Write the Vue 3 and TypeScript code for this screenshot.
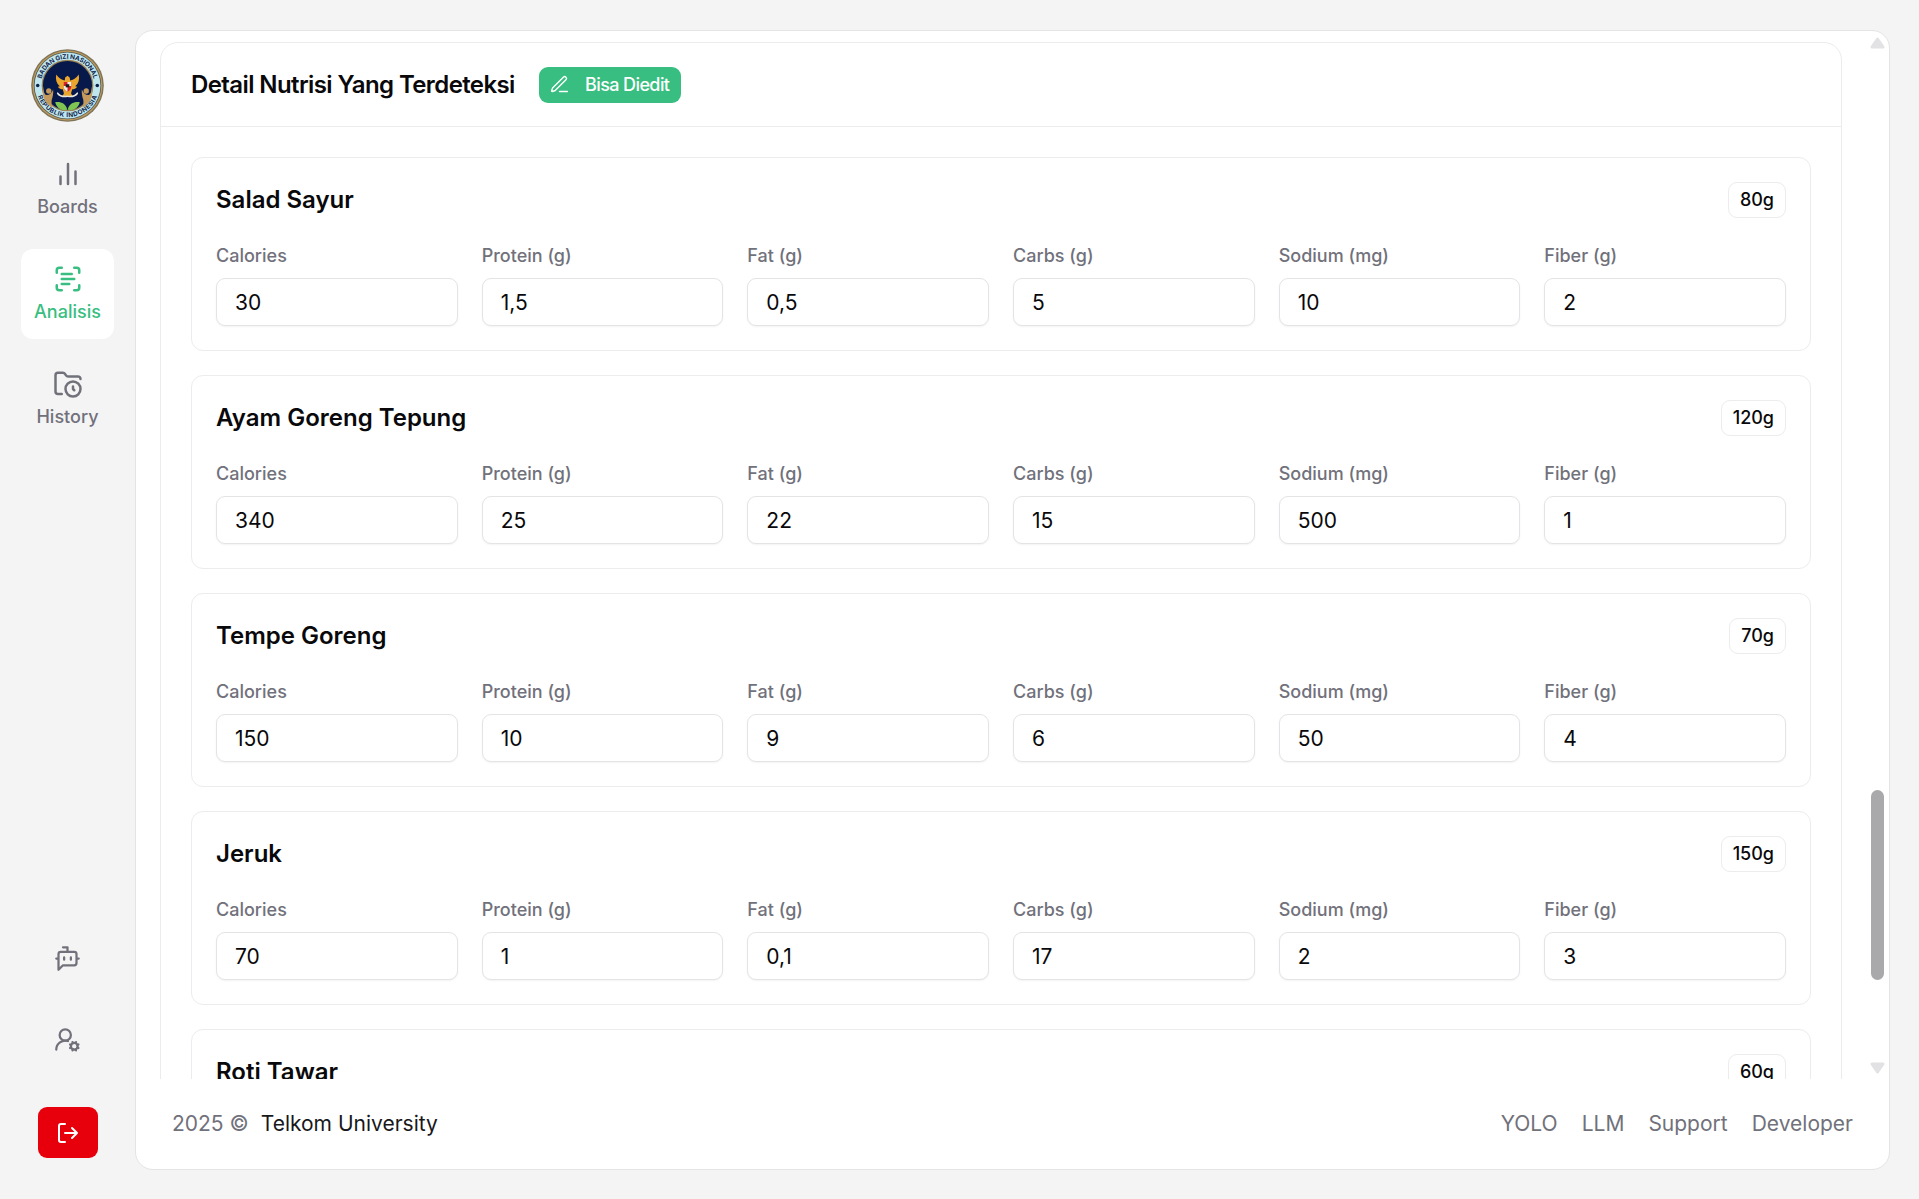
<script setup lang="ts">
interface Food {
  name: string
  weight: string
  values: string[]
}

const fields: string[] = ['Calories', 'Protein (g)', 'Fat (g)', 'Carbs (g)', 'Sodium (mg)', 'Fiber (g)']

const foods: Food[] = [
  { name: 'Salad Sayur', weight: '80g', values: ['30', '1,5', '0,5', '5', '10', '2'] },
  { name: 'Ayam Goreng Tepung', weight: '120g', values: ['340', '25', '22', '15', '500', '1'] },
  { name: 'Tempe Goreng', weight: '70g', values: ['150', '10', '9', '6', '50', '4'] },
  { name: 'Jeruk', weight: '150g', values: ['70', '1', '0,1', '17', '2', '3'] },
  { name: 'Roti Tawar', weight: '60g', values: [] },
]

const links: string[] = ['YOLO', 'LLM', 'Support', 'Developer']
</script>

<template>
  <div class="app">
    <aside class="sidebar">
      <svg class="logo" viewBox="0 0 74 74">
        <defs>
          <path id="arc-top" d="M9.800 37a27.200 27.200 0 0 1 54.400 0" />
          <path id="arc-bottom" d="M5 37a32 32 0 0 0 64 0" />
        </defs>
        <circle cx="37" cy="37" r="36.8" fill="#7f7458" />
        <circle cx="37" cy="37" r="35.4" fill="#c09a5c" />
        <circle cx="37" cy="37" r="34.2" fill="#4f5a55" />
        <circle cx="37" cy="37" r="33.4" fill="#bfe6ee" />
        <circle cx="37" cy="37" r="26.2" fill="#9a8455" />
        <circle cx="37" cy="37" r="24.9" fill="#07184a" />
        <text class="logo-text" textLength="72"><textPath href="#arc-top" startOffset="50%" text-anchor="middle">BADAN GIZI NASIONAL</textPath></text>
        <text class="logo-text" textLength="78"><textPath href="#arc-bottom" startOffset="50%" text-anchor="middle">REPUBLIK INDONESIA</textPath></text>
        <circle cx="6.8" cy="37" r="1.8" fill="#10214d" />
        <circle cx="67.2" cy="37" r="1.8" fill="#10214d" />
        <g fill="#c39a5b">
          <circle cx="18" cy="42.6" r="2.7" />
          <circle cx="56" cy="42.6" r="2.7" />
          <path d="M13.200 37c-1.200 4-.6 8.500 2.300 9.600 3 .4 5.500-2 7-5.600.3 4-.5 8-1.500 10.500-.4 2.500 0 5.500.5 8-4-2-8-7-9.300-12.500-.6-4 0-7 1-10z" />
          <path d="M60.800 37c1.200 4 .6 8.500-2.300 9.600-3 .4-5.500-2-7-5.600-.3 4 .5 8 1.500 10.500.4 2.500 0 5.500-.5 8 4-2 8-7 9.300-12.500.6-4 0-7-1-10z" />
        </g>
        <path d="M25.600 25.800c-1 5 .2 9 3.600 12l-2 .4c1.400 2 3.200 2.500 5 2.600l1.200 4-1.500 3h10.200l-1.500-3 1.200-4c1.800-.1 3.600-.6 5-2.600l-2-.4c3.400-3 4.600-7 3.600-12-2.400 3.600-5 5.400-8.600 6.200l-.6-3.200-2.200-1.600-2.400 1.600-.4 3.200c-3.600-.8-6.200-2.600-8.600-6.200z" fill="#e9a52c" />
        <path d="M33.200 33.500h7.600v5c0 2.200-2 3.800-3.800 4.800-1.800-1-3.800-2.600-3.800-4.800z" fill="#d8232a" />
        <path d="M37 33.500h3.800v4H37zM33.200 37.500H37v5.800c-1.800-1-3.800-2.600-3.800-4.800z" fill="#f3efe6" />
        <path d="M35.200 35.700h3.600v3.200h-3.600z" fill="#1b1b1b" />
        <path d="M27 43.500c2.500 3.500 6 4.300 10 3.600 4 .7 7.500-.1 10-3.600l.8 1.800c-2.800 3.600-6.600 4.200-10.800 3.400-4.200.8-8 .2-10.800-3.400z" fill="#e8e6df" />
        <path d="M36.800 61.500c-6.500 1.500-10.500-1.500-12.300-7.500 6-.8 10.900 1.500 12.300 7.500zM37.200 61.500c6.500 1.500 10.500-1.500 12.300-7.500-6-.8-10.900 1.500-12.300 7.500z" fill="#7fc552" />
      </svg>

      <nav class="nav">
        <a class="nav-item">
          <svg class="icon" viewBox="0 0 24 24"><path d="M18 20V10M12 20V4M6 20v-6" /></svg>
          <span>Boards</span>
        </a>
        <a class="nav-item active">
          <svg class="icon" viewBox="0 0 24 24"><path d="M3 7V5a2 2 0 0 1 2-2h2M17 3h2a2 2 0 0 1 2 2v2M21 17v2a2 2 0 0 1-2 2h-2M7 21H5a2 2 0 0 1-2-2v-2M7 8h8M7 12h10M7 16h6" /></svg>
          <span>Analisis</span>
        </a>
        <a class="nav-item">
          <svg class="icon" viewBox="0 0 24 24"><circle cx="16" cy="16" r="6" /><path d="M7 20H4a2 2 0 0 1-2-2V5a2 2 0 0 1 2-2h3.900a2 2 0 0 1 1.690.900l.810 1.200a2 2 0 0 0 1.670.900H20a2 2 0 0 1 2 2M16 14v2l1 1" /></svg>
          <span>History</span>
        </a>
      </nav>

      <div class="tools">
        <svg class="icon tool" viewBox="0 0 24 24"><path d="M12 6V2H8M8 18l-4 4V8a2 2 0 0 1 2-2h12a2 2 0 0 1 2 2v8a2 2 0 0 1-2 2ZM2 12h2M9 11v2M15 11v2M20 12h2" /></svg>
        <svg class="icon tool" viewBox="0 0 24 24"><path d="M2 21a8 8 0 0 1 10.434-7.620" /><circle cx="10" cy="8" r="5" /><circle cx="18" cy="18" r="3" /><path d="m14.305 19.530.923-.382M15.228 16.852l-.923-.383M16.852 15.228l-.383-.923M16.852 20.772l-.383.924M19.148 15.228l.383-.923M19.530 21.696l-.382-.924M20.772 16.852l.924-.383M20.772 19.148l.924.383" /></svg>
        <button class="logout" type="button">
          <svg class="icon" viewBox="0 0 24 24"><path d="M9 21H5a2 2 0 0 1-2-2V5a2 2 0 0 1 2-2h4M16 17l5-5-5-5M21 12H9" /></svg>
        </button>
      </div>
    </aside>

    <main class="panel">
      <div class="scroll">
        <section class="card">
          <header class="card-head">
            <h2>Detail Nutrisi Yang Terdeteksi</h2>
            <span class="editable">
              <svg class="icon" viewBox="0 0 24 24"><path d="M12 20h9M16.376 3.622a1 1 0 0 1 3.002 3.002L7.368 18.635a2 2 0 0 1-.855.506l-2.872.838a.5.5 0 0 1-.620-.620l.838-2.872a2 2 0 0 1 .506-.854z" /></svg>
              <span>Bisa Diedit</span>
            </span>
          </header>
          <div class="foods">
            <article v-for="food in foods" :key="food.name" class="food">
              <div class="food-head">
                <h3>{{ food.name }}</h3>
                <span class="weight">{{ food.weight }}</span>
              </div>
              <div v-if="food.values.length" class="grid">
                <label v-for="(field, i) in fields" :key="field" class="field">
                  <span>{{ field }}</span>
                  <input type="text" :value="food.values[i]" />
                </label>
              </div>
            </article>
          </div>
        </section>
        <div class="scrollbar">
          <svg class="arrow" viewBox="0 0 15 12"><path d="M7.500 2 13 10H2z" /></svg>
          <div class="thumb"></div>
          <svg class="arrow" viewBox="0 0 15 12"><path d="M7.500 10 13 2H2z" /></svg>
        </div>
      </div>
      <footer class="footer">
        <div class="copy"><span>2025 ©</span><a>Telkom University</a></div>
        <nav class="links"><a v-for="link in links" :key="link">{{ link }}</a></nav>
      </footer>
    </main>
  </div>
</template>

<style>
html,
body {
  margin: 0;
  overflow: hidden;
}
</style>

<style scoped>
.app {
  box-sizing: border-box;
  display: flex;
  width: 1919px;
  height: 1199px;
  background: #f4f4f4;
  color: #09090b;
  font-family: Inter, sans-serif;
}
.app *,
.app *::before {
  box-sizing: border-box;
}
.icon {
  display: block;
  flex: none;
  fill: none;
  stroke: currentColor;
  stroke-width: 2;
  stroke-linecap: round;
  stroke-linejoin: round;
}
.sidebar {
  display: flex;
  flex-direction: column;
  align-items: center;
  width: 135px;
  padding: 49px 0 41px;
  color: #71717b;
}
.logo {
  display: block;
  flex: none;
  width: 73px;
  height: 73px;
}
.logo-text {
  font-size: 6.500px;
  font-weight: 700;
  fill: #15284f;
}
.nav {
  display: flex;
  flex-direction: column;
  gap: 15px;
  margin-top: 22px;
}
.nav-item {
  display: flex;
  flex-direction: column;
  align-items: center;
  gap: 6px;
  width: 93px;
  height: 90px;
  padding-top: 15px;
  border-radius: 12px;
  font-size: 18px;
  font-weight: 500;
  line-height: 24px;
}
.nav-item .icon {
  width: 30px;
  height: 30px;
}
.nav-item.active {
  background: #fff;
  color: #37be80;
}
.tools {
  display: flex;
  flex-direction: column;
  align-items: center;
  margin-top: auto;
}
.tool {
  width: 27px;
  height: 27px;
  margin-bottom: 54px;
}
.logout {
  display: flex;
  align-items: center;
  justify-content: center;
  width: 60px;
  height: 51px;
  padding: 0;
  border: 0;
  border-radius: 9px;
  background: #e7000b;
  color: #fff;
}
.logout .icon {
  width: 24px;
  height: 24px;
}
.panel {
  display: flex;
  flex-direction: column;
  width: 1755px;
  height: 1140px;
  margin-top: 30px;
  border: 1px solid #e4e4e7;
  border-radius: 18px;
  background: #fff;
}
.scroll {
  display: flex;
  flex: none;
  height: 1048px;
  padding-left: 24px;
  overflow: hidden;
}
.card {
  flex: none;
  width: 1682px;
  height: 1300px;
  margin-top: 11px;
  border: 1px solid #ececee;
  border-radius: 18px;
}
.card-head {
  display: flex;
  align-items: center;
  height: 84px;
  padding-left: 30px;
  border-bottom: 1px solid #ececee;
}
h2,
h3 {
  margin: 0;
  font-weight: 600;
}
h2 {
  width: 324px;
  font-size: 24px;
  letter-spacing: -0.600px;
  line-height: 30px;
  white-space: nowrap;
}
.editable {
  display: flex;
  align-items: center;
  width: 142px;
  height: 36px;
  margin-left: 24px;
  padding-left: 10px;
  border-radius: 9px;
  background: #37be80;
  color: #fff;
  font-size: 18px;
  font-weight: 500;
  letter-spacing: -0.600px;
  white-space: nowrap;
}
.editable .icon {
  width: 21px;
  height: 21px;
  margin-right: 15px;
  stroke-width: 1.600;
}
.foods {
  display: flex;
  flex-direction: column;
  gap: 24px;
  padding: 30px 30px 0;
}
.food {
  height: 194px;
  padding: 24px;
  border: 1px solid #ececee;
  border-radius: 12px;
}
.food-head {
  display: flex;
  align-items: center;
  justify-content: space-between;
  height: 36px;
}
h3 {
  font-size: 24px;
  line-height: 34px;
}
.weight {
  display: flex;
  align-items: center;
  height: 36px;
  padding: 0 11px 2px;
  border: 1px solid #ececee;
  border-radius: 9px;
  font-size: 18px;
  font-weight: 500;
}
.grid {
  display: grid;
  grid-template-columns: repeat(6, 1fr);
  gap: 24px;
  margin-top: 25px;
}
.field {
  display: flex;
  flex-direction: column;
  min-width: 0;
  color: #71717b;
  font-size: 18px;
  font-weight: 500;
}
.field span {
  height: 35px;
  line-height: 26px;
}
.field input {
  width: 100%;
  height: 48px;
  padding: 1px 18px 0;
  border: 1px solid #e4e4e7;
  border-radius: 9px;
  outline: 0;
  background: #fff;
  box-shadow: 0 1px 2px rgba(0, 0, 0, 0.05);
  color: #09090b;
  font: 400 21px Inter, sans-serif;
}
.scrollbar {
  display: flex;
  flex-direction: column;
  align-items: center;
  width: 15px;
  height: 1048px;
  margin-left: 28px;
  padding: 6px 0 5px;
}
.arrow {
  display: block;
  width: 15px;
  height: 12px;
  fill: #e2e2e4;
  stroke: #e2e2e4;
  stroke-width: 3;
  stroke-linejoin: round;
}
.thumb {
  width: 13px;
  height: 190px;
  margin: 741px 0 auto;
  border-radius: 7px;
  background: #a9a9ab;
}
.footer {
  display: flex;
  align-items: center;
  justify-content: space-between;
  height: 90px;
  padding: 0 36px;
  color: #71717b;
  font-size: 21px;
  line-height: 30px;
}
.copy,
.links {
  display: flex;
}
.copy {
  gap: 12px;
}
.copy a {
  color: #18181b;
}
.links {
  gap: 24px;
}
</style>
